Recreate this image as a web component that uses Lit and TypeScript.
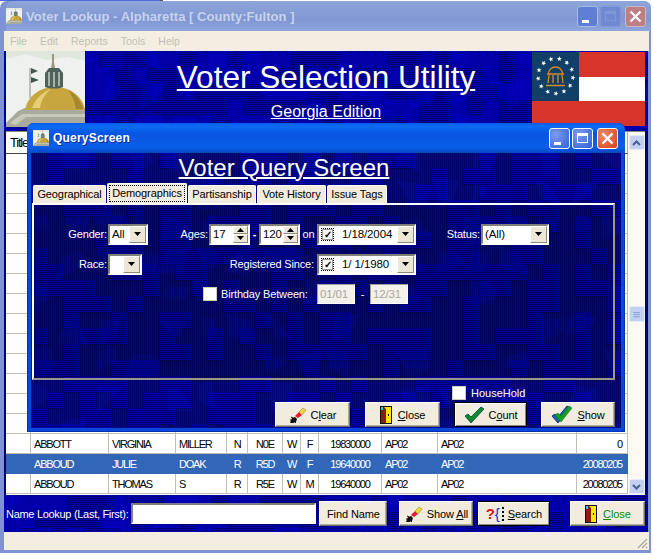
import { LitElement, html, css, svg } from 'lit';
import { customElement, property } from 'lit/decorators.js';

// the wallpaper of the app: blocks of 1px stripes with some lighter county shapes on top
@customElement('maze-bg')
export class MazeBg extends LitElement {
  @property({ type: Number }) w = 100;
  @property({ type: Number }) h = 100;
  @property({ type: Number }) seed = 7;

  static styles = css`
    :host {
      position: absolute;
      inset: 0;
      overflow: hidden;
      background: #00006a;
    }
    svg {
      display: block;
    }
  `;

  render() {
    const S = 16;
    let r = this.seed * 9301 + 49297;
    const next = () => {
      r = (r * 9301 + 49297) % 233280;
      return r / 233280;
    };
    let d = '';
    for (let y = 0; y < this.h; y += S) {
      for (let x = 0; x < this.w; x += S) {
        const horiz = next() < 0.5;
        for (let o = 0.5; o < S; o += 2) {
          d += horiz ? `M${x} ${y + o}h${S}` : `M${x + o} ${y}v${S}`;
        }
      }
    }
    const shapes = [];
    const G = 34;
    for (let y = -10; y < this.h; y += G) {
      for (let x = -10; x < this.w; x += G) {
        if (next() > 0.55) continue;
        const pts = [
          [x + next() * 12, y + next() * 10],
          [x + 18 + next() * 20, y + next() * 9],
          [x + 22 + next() * 16, y + 16 + next() * 18],
          [x + next() * 16, y + 20 + next() * 14],
        ];
        shapes.push(svg`<polygon points=${pts.map((p) => p.join(',')).join(' ')} fill="#0818d8" opacity="0.16" />`);
      }
    }
    return html`<svg width=${this.w} height=${this.h}>
      ${svg`<path d=${d} fill="none" stroke="#0000ae" stroke-width="1" />`}
      ${shapes}
    </svg>`;
  }
}

const dome = (w: number, h: number) => html`<svg width=${w} height=${h} viewBox="0 0 79 76" preserveAspectRatio="none">
  <rect width="79" height="76" fill="#eef1ee" />
  <path d="M0 0h79v10L62 6 40 9 20 3 0 8z" fill="#dfe6dc" />
  <path d="M0 72 12 60l7-3h60v19H0z" fill="#a9aa9e" />
  <path d="M4 72 16 63h63v3H20l-10 8z" fill="#c9c9bb" />
  <path d="M19 59C21 46 33 36 49 36s28 10 30 23z" fill="#c8a63f" />
  <path d="M26 57C29 48 37 41 45 38 38 44 35 50 34 57z" fill="#e6cf74" />
  <path d="M62 39c8 4 13 11 15 19h-7c-1-7-4-14-8-19z" fill="#a58630" />
  <path d="M39 36V22l4-5h10l4 5v14c-5 2-13 2-18 0z" fill="#4e625a" />
  <path d="M42 21h2v14h-2zM47 21h2v15h-2zM52 21h2v14h-2z" fill="#a4b3a8" />
  <path d="M45 17l1-6 0-8 2 0 0 8 1 6z" fill="#9d9682" />
  <path d="M24 17v30" stroke="#8d8d85" stroke-width="1" />
  <path d="M25 17l7 3-7 3zM25 26l8 3-8 3z" fill="#47544e" />
</svg>`;

const stars = () => {
  let pts = [];
  for (let i = 0; i < 13; i++) {
    const a = (i / 13) * Math.PI * 2 - 1.35;
    const cx = 23.5 + Math.cos(a) * 17.5;
    const cy = 24 + Math.sin(a) * 17.5;
    let p = '';
    for (let k = 0; k < 10; k++) {
      const rr = k % 2 ? 1.1 : 2.6;
      const b = (k / 10) * Math.PI * 2 - Math.PI / 2 + i * 0.5;
      p += `${(cx + Math.cos(b) * rr).toFixed(2)},${(cy + Math.sin(b) * rr).toFixed(2)} `;
    }
    pts.push(svg`<polygon points=${p} fill="#fff" />`);
  }
  return pts;
};

const flag = () => html`<svg width="113" height="74" viewBox="0 0 113 74">
  <rect width="113" height="74" fill="#d8352a" />
  <rect x="47" y="25" width="66" height="24" fill="#fff" />
  <rect width="47" height="49" fill="#123f68" />
  ${stars()}
  <g fill="none" stroke="#d98a1e" stroke-width="1.3">
    <path d="M16.5 22a7 7 0 0 1 14 0" />
    <path d="M15 22h17M17 23l-1 8M21 23v8M26 23v8M30 23l1 8M14 33.5h19" />
  </g>
</svg>`;

const broom = () => html`<svg width="18" height="18" viewBox="0 0 18 18">
  <path d="M1 17 3 12l3-1 2 2-1 3-3 1z" fill="#111" />
  <path d="M2 11l2 1M6 16l1 1M1 14l2 0" stroke="#111" />
  <path d="M6 10 10 6l3 3-4 3z" fill="#e8183a" />
  <path d="M10 6l4-4 3 2-4 5z" fill="#f0d83a" stroke="#8a7a10" stroke-width=".5" />
</svg>`;

const door = () => html`<svg width="12" height="18" viewBox="0 0 12 18">
  <rect x=".5" y=".5" width="11" height="17" fill="#ffe800" stroke="#111" />
  <path d="M1 1h3l2 2v14H1z" fill="#8c1c12" />
  <path d="M1 1h2v3H1z" fill="#22c8e8" />
  <rect x="8" y="8" width="1" height="2" fill="#111" />
</svg>`;

const check = () => html`<svg width="21" height="18" viewBox="0 0 21 18">
  <path d="M1 10l3-2 3 3L17 1l3 2L7 17z" fill="#0e8a2a" stroke="#0b3f4a" stroke-width=".8" />
</svg>`;

const checks = () => html`<svg width="22" height="20" viewBox="0 0 22 20">
  <path d="M1 11l3-2 3 3L16 1l3 2L7 18z" fill="#14699a" stroke="#12208a" stroke-width=".9" />
  <path d="M4 10l3-2 3 3L18 1l3 2L10 17z" fill="#18a01c" stroke="#0b6a2a" stroke-width=".5" />
</svg>`;

const quest = () => html`<span class="quest"><b class="q">?</b><b class="br">{</b><b class="dots"></b></span>`;

const arrow = html`<svg width="7" height="4" viewBox="0 0 7 4"><path d="M0 0h7L3.5 4z" fill="#000" /></svg>`;
const up = html`<svg width="7" height="4" viewBox="0 0 7 4"><path d="M0 4h7L3.5 0z" fill="#000" /></svg>`;

const combo = (text: string, width: number) => html`<div class="sunken combo" style="width:${width}px">
  <span>${text}</span>
  <i class="drop">${arrow}</i>
</div>`;

const spin = (text: string) => html`<div class="sunken spin">
  <span>${text}</span>
  <div class="btns"><i>${up}</i><i>${arrow}</i></div>
</div>`;

const datePick = (text: string) => html`<div class="sunken date">
  <b class="tick">✓</b>
  <span>${text}</span>
  <i class="drop">${arrow}</i>
</div>`;

const xBtn = html`<svg width="13" height="13" viewBox="0 0 13 13"><path d="M1.5 1.5l10 10M11.5 1.5l-10 10" stroke="#fff" stroke-width="2.4" /></svg>`;

const ROWS = [
  ['', 'ABBOTT', 'VIRGINIA', 'MILLER', 'N', 'N0E', 'W', 'F', '19830000', 'AP02', 'AP02', '0'],
  ['', 'ABBOUD', 'JULIE', 'DOAK', 'R', 'R5D', 'W', 'F', '19640000', 'AP02', 'AP02', '20080205'],
  ['', 'ABBOUD', 'THOMAS', 'S', 'R', 'R5E', 'W', 'M', '19640000', 'AP02', 'AP02', '20080205'],
];
const CENTERED = [4, 5, 6, 7, 8];

@customElement('app-root')
export class AppRoot extends LitElement {
  static styles = css`
    :host {
      display: block;
      position: relative;
      width: 653px;
      height: 555px;
      overflow: hidden;
      background: linear-gradient(90deg, #4a6ad8 0 160px, #555 160px 163px, #fff 163px) top / 100% 1px no-repeat, #fff;
      font-family: 'Liberation Sans', Arial, sans-serif;
      font-size: 11px;
      color: #000;
    }

    /* main window (inactive colours) */
    .win {
      box-sizing: border-box;
      width: 651px;
      height: 552px;
      margin-top: 1px;
      padding: 0 3px 3px 4px;
      display: flex;
      flex-direction: column;
      background: #7f93d2;
      border-radius: 7px 7px 0 0;
    }
    .titlebar {
      flex: none;
      height: 30px;
      display: flex;
      align-items: center;
      gap: 4px;
      margin: 0 -3px 0 2px;
      padding-right: 5px;
      background: linear-gradient(#8fa6da, #7f96d2 60%, #8ea6dc);
      border-radius: 7px 7px 0 0;
    }
    .titlebar .name {
      flex: 1;
      font-weight: bold;
      font-size: 13px;
      letter-spacing: 0.05px;
      color: #c5d3ee;
      white-space: nowrap;
    }
    .capbtns {
      display: flex;
      gap: 2px;
    }
    .cap {
      box-sizing: border-box;
      width: 21px;
      height: 21px;
      border: 1px solid #fff;
      border-radius: 3px;
      background: radial-gradient(circle at 30% 30%, #7d9cec, #2f5fd8);
      display: flex;
      align-items: center;
      justify-content: center;
      position: relative;
    }
    .cap.close {
      background: radial-gradient(circle at 30% 30%, #ee8a68, #d8401c);
      margin-left: 2px;
    }
    .cap .min {
      position: absolute;
      left: 4px;
      bottom: 3px;
      width: 7px;
      height: 3px;
      background: #fff;
    }
    .cap .max {
      width: 11px;
      height: 10px;
      box-sizing: border-box;
      border: 1px solid #fff;
      border-top-width: 3px;
    }
    .faded .cap {
      border-color: #a9bbe4;
      background: #5f7fd4;
    }
    .faded .cap:nth-child(2) {
      border-color: #7f97d8;
      background: #7089d0;
    }
    .faded .cap.close {
      background: #bb7f84;
      border-color: #c9b9c4;
    }
    .faded .cap .max {
      border-color: #7f97d8;
    }

    .menu {
      flex: none;
      height: 20px;
      display: flex;
      align-items: center;
      gap: 13px;
      padding-left: 6px;
      font-size: 10.5px;
      color: #c2bfb4;
      background: #f3eee0;
      margin-right: -1px;
    }

    .client {
      flex: 1;
      display: flex;
      flex-direction: column;
      min-height: 0;
      background: #00006e;
    }

    .banner {
      flex: none;
      position: relative;
      height: 80px;
      display: grid;
    }
    .banner > .slot {
      grid-area: 1 / 1;
      position: relative;
    }
    .dome {
      justify-self: start;
      margin-left: 2px;
      height: 76px;
    }
    .flag {
      justify-self: end;
      margin-right: 3px;
      margin-top: 1px;
    }
    .heading {
      justify-self: center;
      text-align: center;
      color: #fff;
    }
    .heading h1 {
      margin: 4px 0 0;
      font-weight: normal;
      font-size: 31.6px;
      line-height: 45px;
      text-decoration: underline;
      text-decoration-thickness: 2px;
    }
    .heading div {
      margin-top: 2px;
      font-size: 16px;
      line-height: 20px;
      text-decoration: underline;
      text-decoration-thickness: 1px;
    }

    /* table behind the query window */
    .tablewrap {
      flex: none;
      height: 364px;
      display: flex;
      margin-left: 2px;
      position: relative;
    }
    .table {
      width: 622px;
      background: #fff;
      border-top: 1px solid #8a8a80;
      box-sizing: border-box;
    }
    .row {
      display: grid;
      grid-template-columns: 25px 78px 67px 51px 21px 35px 18px 18px 63px 56px 139px 51px;
      height: 20px;
    }
    .row.head {
      height: 22px;
    }
    .row > div {
      box-sizing: border-box;
      border-right: 1px solid #c0bfb6;
      border-bottom: 1px solid #c0bfb6;
      padding: 0 3px;
      line-height: 20px;
      font-size: 11px;
      letter-spacing: -1.2px;
      overflow: hidden;
      white-space: nowrap;
    }
    .row.head > div {
      font-size: 13px;
      line-height: 21px;
      padding: 0 4px;
      border-bottom: 1px solid #444;
      border-right: 1px solid #aaa;
      overflow: visible;
    }
    .row.sel > div {
      background: #3267b8;
      color: #fff;
      border-color: #3267b8;
    }
    .row .c {
      text-align: center;
      padding: 0;
    }
    .row .rt {
      text-align: right;
      padding-right: 5px;
    }
    .scroll {
      flex: 1;
      background: #fbf9f2;
      border-top: 1px solid #8a8a80;
      margin-right: 3px;
      display: flex;
      flex-direction: column;
      align-items: center;
      position: relative;
    }
    .sbtn {
      box-sizing: border-box;
      width: 16px;
      height: 15px;
      margin-top: 3px;
      background: #c3d0f4;
      border: 1px solid #e4ebfb;
      border-radius: 2px;
      display: flex;
      align-items: center;
      justify-content: center;
    }
    .sbtn.thumb {
      margin-top: 156px;
      height: 16px;
      color: #8ea2da;
      font-size: 13px;
      line-height: 1;
    }
    .sbtn.last {
      margin-top: auto;
      margin-bottom: 1px;
    }

    .bottom {
      flex: none;
      position: relative;
      height: 37px;
    }
    .bottom .inner {
      position: relative;
      height: 100%;
      display: flex;
      align-items: center;
      color: #fff;
      padding-left: 2px;
    }
    .bottom .label {
      font-size: 11px;
      white-space: nowrap;
      letter-spacing: -0.3px;
    }
    .input {
      box-sizing: border-box;
      width: 185px;
      height: 21px;
      margin-left: 3px;
      background: #fff;
      border: 2px solid #fff;
      border-top-color: #808078;
      border-left-color: #808078;
    }
    .footer {
      flex: 1;
      margin-right: -1px;
      background: #f3eee0;
      position: relative;
      overflow: hidden;
    }
    .grip {
      position: absolute;
      right: 1px;
      bottom: 1px;
    }

    /* buttons */
    .btn {
      box-sizing: border-box;
      height: 25px;
      display: flex;
      align-items: center;
      justify-content: center;
      gap: 4px;
      color: #000;
      font-size: 11px;
      letter-spacing: -0.1px;
      background: #f1ecdd;
      border: 1px solid;
      border-color: #fff #6f6f66 #6f6f66 #fff;
      box-shadow: inset -1px -1px 0 #b0ad9f;
    }
    .btn.def {
      border-color: #000;
      box-shadow: inset 1px 1px 0 #fff, inset -1px -1px 0 #8a8a80;
    }
    .btn.green {
      color: #0a8a0a;
    }
    .quest {
      display: flex;
      align-items: center;
      width: 18px;
      font-size: 15px;
      line-height: 1;
    }
    .quest .q {
      color: #e01010;
    }
    .quest .br {
      color: #1030d8;
      font-weight: normal;
    }
    .quest .dots {
      width: 3px;
      height: 14px;
      border-right: 2px dotted #000;
    }

    /* query window */
    .dialog {
      position: absolute;
      left: 27px;
      top: 123px;
      width: 598px;
      height: 309px;
      box-sizing: border-box;
      padding: 0 4px 4px;
      display: flex;
      flex-direction: column;
      background: #0a48dc;
      border-radius: 7px 7px 0 0;
      box-shadow: inset 0 0 0 1px #0030b0;
    }
    .dtitle {
      flex: none;
      height: 30px;
      display: flex;
      align-items: center;
      gap: 4px;
      margin: 0 -4px;
      padding: 0 7px 0 6px;
      background: linear-gradient(#0a5ae8, #0c6cf4 12%, #0755e2 35%, #0a5fe8 80%, #0647c8);
      border-radius: 7px 7px 0 0;
      color: #fff;
    }
    .dtitle .name {
      flex: 1;
      font-weight: bold;
      font-size: 12px;
      letter-spacing: 0.2px;
      text-shadow: 1px 1px 0 #0a2a90;
    }
    .dbody {
      flex: 1;
      position: relative;
      min-height: 0;
    }
    .dinner {
      position: relative;
      height: 100%;
      display: flex;
      flex-direction: column;
      box-sizing: border-box;
    }
    .dinner h2 {
      margin: 0;
      color: #fff;
      font-weight: normal;
      text-align: center;
      font-size: 24px;
      line-height: 30px;
      text-decoration: underline;
      text-decoration-thickness: 2px;
      padding-right: 84px;
    }
    .tabs {
      display: flex;
      align-items: flex-end;
      height: 20px;
      padding-left: 2px;
      gap: 1px;
    }
    .tab {
      box-sizing: border-box;
      height: 18px;
      background: #f1ecdd;
      border: 1px solid #fff;
      border-bottom: none;
      border-radius: 2px 2px 0 0;
      text-align: center;
      line-height: 17px;
      font-size: 11px;
      letter-spacing: -0.1px;
    }
    .tab.on {
      height: 21px;
      line-height: 18px;
      outline: 1px dotted #000;
      outline-offset: -3px;
      margin-bottom: -1px;
      position: relative;
    }
    .panel {
      flex: none;
      position: relative;
      box-sizing: border-box;
      height: 177px;
      margin: 0 6px 0 1px;
      border: 2px solid;
      border-color: #fff #9a988c #9a988c #fff;
      background: rgba(0, 0, 50, 0.2);
      color: #fff;
      display: flex;
      flex-direction: column;
      padding-top: 19px;
      gap: 10px;
      font-size: 11px;
      letter-spacing: -0.15px;
    }
    .fr {
      display: flex;
      align-items: center;
      height: 20px;
      white-space: nowrap;
    }
    .lab {
      text-align: right;
      padding-right: 1px;
    }
    .dash {
      width: 9px;
      text-align: center;
      font-weight: bold;
    }
    .sunken {
      box-sizing: border-box;
      height: 21px;
      background: #fff;
      color: #000;
      border: 2px solid #fff;
      border-top-color: #808078;
      border-left-color: #808078;
      display: flex;
      align-items: center;
      font-size: 11.5px;
      letter-spacing: -0.1px;
      padding-left: 2px;
    }
    .sunken > span {
      flex: 1;
    }
    .drop {
      flex: none;
      box-sizing: border-box;
      width: 17px;
      height: 17px;
      background: #ece7d6;
      border: 1px solid;
      border-color: #fff #8a8a80 #8a8a80 #fff;
      display: flex;
      align-items: center;
      justify-content: center;
    }
    .spin {
      width: 41px;
    }
    .btns {
      flex: none;
      width: 15px;
      display: flex;
      flex-direction: column;
    }
    .btns i {
      box-sizing: border-box;
      height: 8.5px;
      background: #ece7d6;
      border: 1px solid;
      border-color: #fff #8a8a80 #8a8a80 #fff;
      display: flex;
      align-items: center;
      justify-content: center;
    }
    .date {
      width: 99px;
    }
    .date > span {
      padding-left: 8px;
    }
    .tick {
      flex: none;
      box-sizing: border-box;
      width: 13px;
      height: 13px;
      font-size: 10px;
      line-height: 11px;
      text-align: center;
      color: #000;
      border: 1px dotted #000;
      outline: 1px solid #999;
      outline-offset: -2px;
    }
    .cb {
      box-sizing: border-box;
      flex: none;
      width: 14px;
      height: 14px;
      background: #fff;
      border: 1px solid #cfccbe;
    }
    .ro {
      box-sizing: border-box;
      height: 20px;
      background: #f3f1ea;
      color: #a8a8a0;
      border: 1px solid #fff;
      border-top-color: #a0a098;
      border-left-color: #a0a098;
      font-size: 11.5px;
      line-height: 18px;
      padding-left: 2px;
    }
    .dfoot {
      flex: 1;
      display: flex;
      flex-direction: column;
      padding-left: 244px;
    }
    .hh {
      height: 18px;
      margin-top: 4px;
      display: flex;
      align-items: center;
      gap: 5px;
      color: #fff;
      font-size: 11px;
      padding-left: 177px;
    }
    .dbtns {
      display: flex;
    }
  `;

  cellClass(i: number) {
    if (CENTERED.includes(i)) return 'c';
    if (i === 11) return 'rt';
    return '';
  }

  render() {
    const empty = Array.from({ length: 14 });
    const tabs = [
      ['Geographical', 73],
      ['Demographics', 80],
      ['Partisanship', 68],
      ['Vote History', 69],
      ['Issue Tags', 60],
    ];
    return html`
      <div class="win">
        <div class="titlebar faded">
          ${dome(16, 16)}
          <span class="name">Voter Lookup - Alpharetta [ County:Fulton ]</span>
          <div class="capbtns">
            <div class="cap"><i class="min"></i></div>
            <div class="cap"><i class="max"></i></div>
            <div class="cap close">${xBtn}</div>
          </div>
        </div>
        <div class="menu">
          <span>File</span><span>Edit</span><span>Reports</span><span>Tools</span><span>Help</span>
        </div>
        <div class="client">
          <div class="banner">
            <maze-bg w="644" h="80" seed="3"></maze-bg>
            <div class="slot dome">${dome(79, 76)}</div>
            <div class="slot heading">
              <h1>Voter Selection Utility</h1>
              <div>Georgia Edition</div>
            </div>
            <div class="slot flag">${flag()}</div>
          </div>
          <div class="tablewrap">
            <div class="table">
              <div class="row head">
                <div>Title</div>
                ${Array.from({ length: 11 }).map(() => html`<div></div>`)}
              </div>
              ${empty.map(
                () => html`<div class="row">${Array.from({ length: 12 }).map(() => html`<div></div>`)}</div>`
              )}
              ${ROWS.map(
                (r, n) => html`<div class="row ${n === 1 ? 'sel' : ''}">
                  ${r.map((c, i) => html`<div class=${this.cellClass(i)}>${c}</div>`)}
                </div>`
              )}
            </div>
            <div class="scroll">
              <div class="sbtn">
                <svg width="9" height="6" viewBox="0 0 9 6"><path d="M1 5l3.5-3.5L8 5" fill="none" stroke="#4a5f90" stroke-width="2" /></svg>
              </div>
              <div class="sbtn thumb">≡</div>
              <div class="sbtn last">
                <svg width="9" height="6" viewBox="0 0 9 6"><path d="M1 1l3.5 3.5L8 1" fill="none" stroke="#4a5f90" stroke-width="2" /></svg>
              </div>
            </div>
          </div>
          <div class="bottom">
            <maze-bg w="644" h="37" seed="5"></maze-bg>
            <div class="inner">
              <span class="label">Name Lookup (Last, First):</span>
              <div class="input"></div>
              <div class="btn" style="width:68px;margin-left:3px">Find Name</div>
              <div class="btn" style="width:74px;margin-left:12px">${broom()}<span>Show <u>A</u>ll</span></div>
              <div class="btn def" style="width:73px;margin-left:4px">${quest()}<span><u>S</u>earch</span></div>
              <div class="btn green" style="width:75px;margin-left:20px;gap:6px">${door()}<span><u>C</u>lose</span></div>
            </div>
          </div>
          <div class="footer">
            <svg class="grip" width="12" height="12" viewBox="0 0 12 12">
              <path d="M11 2 2 11M11 6 6 11M11 10 10 11" stroke="#a9a79a" stroke-width="1.3" />
            </svg>
          </div>
        </div>
      </div>

      <div class="dialog">
        <div class="dtitle">
          ${dome(16, 16)}
          <span class="name">QueryScreen</span>
          <div class="capbtns">
            <div class="cap"><i class="min"></i></div>
            <div class="cap"><i class="max"></i></div>
            <div class="cap close">${xBtn}</div>
          </div>
        </div>
        <div class="dbody">
          <maze-bg w="590" h="275" seed="11"></maze-bg>
          <div class="dinner">
            <h2>Voter Query Screen</h2>
            <div class="tabs">
              ${tabs.map(
                ([t, w]) => html`<div class="tab ${t === 'Demographics' ? 'on' : ''}" style="width:${w}px">${t}</div>`
              )}
            </div>
            <div class="panel">
              <div class="fr">
                <span class="lab" style="width:73px">Gender:</span>
                ${combo('All', 40)}
                <span class="lab" style="width:60px">Ages:</span>
                ${spin('17')}
                <span class="dash">-</span>
                ${spin('120')}
                <span style="width:17px;text-align:center">on</span>
                ${datePick('1/18/2004')}
                <span class="lab" style="width:64px">Status:</span>
                ${combo('(All)', 68)}
              </div>
              <div class="fr">
                <span class="lab" style="width:73px">Race:</span>
                ${combo('', 34)}
                <span class="lab" style="width:172px">Registered Since:</span>
                <span style="width:2px"></span>
                ${datePick('1/ 1/1980')}
              </div>
              <div class="fr">
                <span style="width:169px"></span>
                <i class="cb"></i>
                <span style="width:96px;padding-left:4px">Birthday Between:</span>
                <div class="ro" style="width:38px">01/01</div>
                <span style="width:15px;text-align:center">-</span>
                <div class="ro" style="width:38px">12/31</div>
              </div>
            </div>
            <div class="dfoot">
              <div class="hh"><i class="cb"></i>HouseHold</div>
              <div class="dbtns">
                <div class="btn" style="width:75px">${broom()}<span>C<u>l</u>ear</span></div>
                <div class="btn" style="width:75px;margin-left:15px;gap:6px">${door()}<span><u>C</u>lose</span></div>
                <div class="btn def" style="width:73px;margin-left:14px">${check()}<span>C<u>o</u>unt</span></div>
                <div class="btn" style="width:74px;margin-left:14px">${checks()}<span><u>S</u>how</span></div>
              </div>
            </div>
          </div>
        </div>
      </div>
    `;
  }
}

declare global {
  interface HTMLElementTagNameMap {
    'app-root': AppRoot;
    'maze-bg': MazeBg;
  }
}
